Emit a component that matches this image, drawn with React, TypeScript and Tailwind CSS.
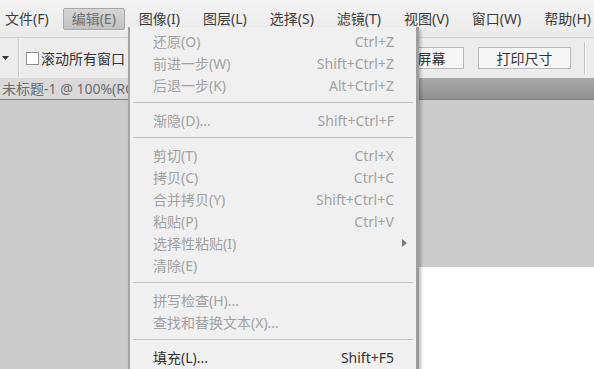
import React from "react";

const menuBar = [
  { label: "文件(F)" },
  { label: "编辑(E)", active: true },
  { label: "图像(I)" },
  { label: "图层(L)" },
  { label: "选择(S)" },
  { label: "滤镜(T)" },
  { label: "视图(V)" },
  { label: "窗口(W)" },
  { label: "帮助(H)" },
];

// "sep" = separator line
const editMenu: any[] = [
  { label: "还原(O)", key: "Ctrl+Z" },
  { label: "前进一步(W)", key: "Shift+Ctrl+Z" },
  { label: "后退一步(K)", key: "Alt+Ctrl+Z" },
  "sep",
  { label: "渐隐(D)...", key: "Shift+Ctrl+F" },
  "sep",
  { label: "剪切(T)", key: "Ctrl+X" },
  { label: "拷贝(C)", key: "Ctrl+C" },
  { label: "合并拷贝(Y)", key: "Shift+Ctrl+C" },
  { label: "粘贴(P)", key: "Ctrl+V" },
  { label: "选择性粘贴(I)", sub: true },
  { label: "清除(E)" },
  "sep",
  { label: "拼写检查(H)..." },
  { label: "查找和替换文本(X)..." },
  "sep",
  { label: "填充(L)...", key: "Shift+F5", enabled: true },
];

export default function App() {
  return (
    <div className="relative flex h-[369px] w-[594px] flex-col overflow-hidden bg-[#cbcbcb] text-[14px] [font-family:'Noto_Sans','Noto_Sans_CJK_SC',sans-serif]">
      {/* menu bar */}
      <div className="flex h-[37px] shrink-0 items-center overflow-hidden bg-gradient-to-b from-[#f3f3f3] to-[#ebebeb]">
        <div className="-ml-1 flex shrink-0 items-center gap-[5px]">
          {menuBar.map((m, i) => (
            <div
              key={i}
              className={
                m.active
                  ? "flex h-[22px] shrink-0 items-center whitespace-nowrap rounded-[2px] border border-[#a9a9a9] bg-gradient-to-b from-[#d6d6d6] to-[#c2c2c2] px-[8px] text-[#707070]"
                  : "flex h-[22px] shrink-0 items-center whitespace-nowrap px-[9px] text-[#3c3c3c]"
              }
            >
              {m.label}
            </div>
          ))}
        </div>
      </div>

      {/* options bar */}
      <div className="flex h-[41px] shrink-0 items-center border-t border-[#d2d2d2] bg-[#ececec]">
        <svg width="7" height="4" viewBox="0 0 7 4" className="ml-[2px] shrink-0">
          <path d="M0 0h7L3.5 4z" fill="#333" />
        </svg>
        <div className="ml-[9px] h-[38px] w-[2px] shrink-0 border-l border-r border-l-[#c9c9c9] border-r-[#fafafa]" />
        <div className="ml-[6px] h-[13px] w-[13px] shrink-0 border border-[#8e8e8e] bg-white" />
        <span className="ml-[2px] shrink-0 whitespace-nowrap text-[#333]">滚动所有窗口</span>
        <div className="ml-[246px] flex h-[22px] w-[93px] shrink-0 items-center justify-center whitespace-nowrap border border-[#b9b9b9] bg-[#f6f6f6] text-[#333]">
          填充屏幕
        </div>
        <div className="ml-[14px] flex h-[22px] w-[93px] shrink-0 items-center justify-center whitespace-nowrap border border-[#b9b9b9] bg-[#f6f6f6] text-[#333]">
          打印尺寸
        </div>
        <div className="ml-[13px] h-[32px] w-[2px] shrink-0 border-l border-r border-l-[#c4c4c4] border-r-[#fafafa]" />
      </div>

      {/* document tabs */}
      <div className="flex h-[22px] shrink-0 border-b border-[#7f7f7f] bg-gradient-to-b from-[#a9a9a9] to-[#8f8f8f]">
        <div className="flex w-[300px] items-center whitespace-nowrap bg-[#d9d9d9] pl-[2px] text-[#6c6c6c]">
          未标题-1 @ 100%(RGB/8)
        </div>
      </div>

      {/* canvas */}
      <div className="flex flex-1 flex-col pl-[300px] pt-[167px]">
        <div className="flex-1 bg-white" />
      </div>

      {/* edit dropdown */}
      <div className="absolute left-[128px] top-[27px] h-[360px] w-[291px] border-l-2 border-r-[3px] border-l-[#a3a3a3] border-r-[#9e9e9e] bg-[#f0f0f0] pt-[3px] shadow-[2px_2px_3px_rgba(0,0,0,0.25)]">
        {editMenu.map((it, i) =>
          it === "sep" ? (
            <div key={i} className="flex h-[13px] items-center px-[3px]">
              <div className="h-px w-full bg-[#c3c3c3]" />
            </div>
          ) : (
            <div
              key={i}
              className={`flex h-[22px] items-center justify-between pl-[23px] pr-[22px] whitespace-nowrap ${
                it.enabled ? "text-[#333]" : "text-[#a2a2a2]"
              }`}
            >
              <span>{it.label}</span>
              {it.key && <span>{it.key}</span>}
              {it.sub && (
                <svg width="5" height="8" viewBox="0 0 5 8" className="mr-[-13px]">
                  <path d="M0 0l5 4-5 4z" fill="#7a7a7a" />
                </svg>
              )}
            </div>
          )
        )}
      </div>
    </div>
  );
}
